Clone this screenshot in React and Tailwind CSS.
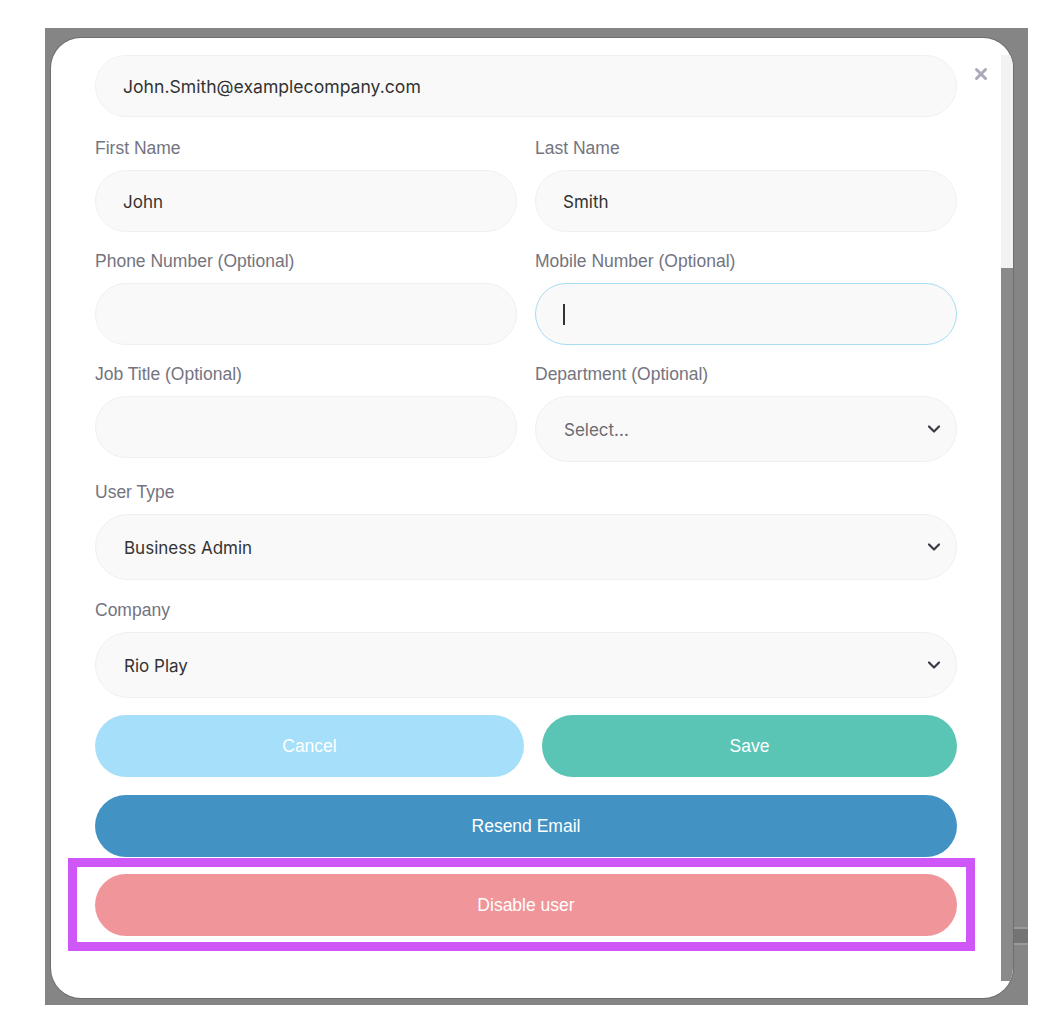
import React from "react";

const labelCls =
  "block text-[17.5px] leading-[22px] text-[#74747f] font-['Liberation_Sans',Arial,sans-serif]";

function Chevron() {
  return (
    <svg width="14" height="10" viewBox="0 0 14 10" className="absolute right-[15px] top-1/2 -translate-y-1/2">
      <polyline points="2,2.5 7,7.5 12,2.5" fill="none" stroke="#3b3b47" strokeWidth="2.2" strokeLinecap="round" strokeLinejoin="round" />
    </svg>
  );
}

function Field({ label, children }) {
  return (
    <div className="flex flex-col">
      <span className={labelCls}>{label}</span>
      <div className="mt-[11px]">{children}</div>
    </div>
  );
}

function TextInput({ value, focused, size = "text-[17px]" }) {
  return (
    <div
      className={
        "w-full h-[62px] rounded-full bg-[#f9f9f9] flex items-center px-[27px] pt-[3px] text-[#333] font-['Inter',sans-serif] " +
        size +
        (focused ? " border border-[#a8dcf5]" : " border border-[#f0f0f0]")
      }
    >
      {focused ? <span className="w-[1.5px] h-[21px] bg-[#333] -mt-[3px]" /> : value}
    </div>
  );
}

function SelectBox({ value, placeholder }) {
  return (
    <div className="relative w-full h-[66px] rounded-full bg-[#f9f9f9] border border-[#f0f0f0] flex items-center px-[28px] pt-[3px] text-[17px] font-['Inter',sans-serif]">
      {value ? (
        <span className="text-[#333]">{value}</span>
      ) : (
        <span className="text-[#6a6a70]">{placeholder}</span>
      )}
      <Chevron />
    </div>
  );
}

function Btn({ children, cls }) {
  return (
    <button
      className={
        "h-[62px] rounded-full text-white text-[17.5px] font-['Liberation_Sans',Arial,sans-serif] flex items-center justify-center " +
        cls
      }
    >
      {children}
    </button>
  );
}

export default function App() {
  return (
    <div className="w-[1056px] h-[1036px] bg-white relative overflow-hidden">
      {/* dimmed backdrop */}
      <div className="absolute left-[45px] top-[28px] w-[983px] h-[977px] bg-[#858585]">
        {/* small detail at the right edge of the backdrop */}
        <div className="absolute right-0 top-[899px] w-[15px] h-[18px] border-y-[2px] border-[#9a9a9a] bg-[#747474]" />
        {/* modal */}
        <div className="absolute left-[6px] top-[10px] w-[962px] h-[960px] bg-white rounded-[30px] shadow-[0_0_0_1px_#6e6e6e] overflow-hidden flex">
          <div className="relative flex-1 pl-[44px] pr-[44px] pt-[17px]">
            <div className="w-full">
              <TextInput value="John.Smith@examplecompany.com" size="text-[17.6px]" />
            </div>

            <div className="grid grid-cols-2 gap-x-[18px] gap-y-[18px] mt-[20px]">
              <Field label="First Name">
                <TextInput value="John" />
              </Field>
              <Field label="Last Name">
                <TextInput value="Smith" />
              </Field>
              <Field label="Phone Number (Optional)">
                <TextInput value="" />
              </Field>
              <Field label="Mobile Number (Optional)">
                <TextInput focused />
              </Field>
              <Field label="Job Title (Optional)">
                <TextInput value="" />
              </Field>
              <Field label="Department (Optional)">
                <SelectBox placeholder="Select..." />
              </Field>
            </div>

            <div className="mt-[19px]">
              <Field label="User Type">
                <SelectBox value="Business Admin" />
              </Field>
            </div>
            <div className="mt-[19px]">
              <Field label="Company">
                <SelectBox value="Rio Play" />
              </Field>
            </div>

            <div className="flex gap-[18px] mt-[17px]">
              <Btn cls="w-[429px] bg-[#a6dffa]">Cancel</Btn>
              <Btn cls="flex-1 bg-[#5bc5b5]">Save</Btn>
            </div>
            <Btn cls="w-full mt-[18px] bg-[#4293c3]">Resend Email</Btn>
            <Btn cls="w-full mt-[17px] bg-[#f0959a]">Disable user</Btn>
          </div>

          {/* close button */}
          <button className="absolute right-[25px] top-[29px] w-[14px] h-[14px]">
            <svg width="14" height="14" viewBox="0 0 14 14">
              <path d="M2.5 2.5 L11.5 11.5 M11.5 2.5 L2.5 11.5" stroke="#a9a9b9" strokeWidth="3" strokeLinecap="round" />
            </svg>
          </button>

          {/* scrollbar */}
          <div className="w-[12px] flex flex-col pt-[17px] pb-[17px]">
            <div className="h-[213px] bg-[#f1f2f4]" />
            <div className="flex-1 bg-[#8a8a8a]" />
          </div>
        </div>
      </div>

      {/* highlight frame */}
      <div className="absolute left-[68px] top-[858px] w-[907px] h-[93px] border-[9px] border-[#d057f7]" />
    </div>
  );
}
